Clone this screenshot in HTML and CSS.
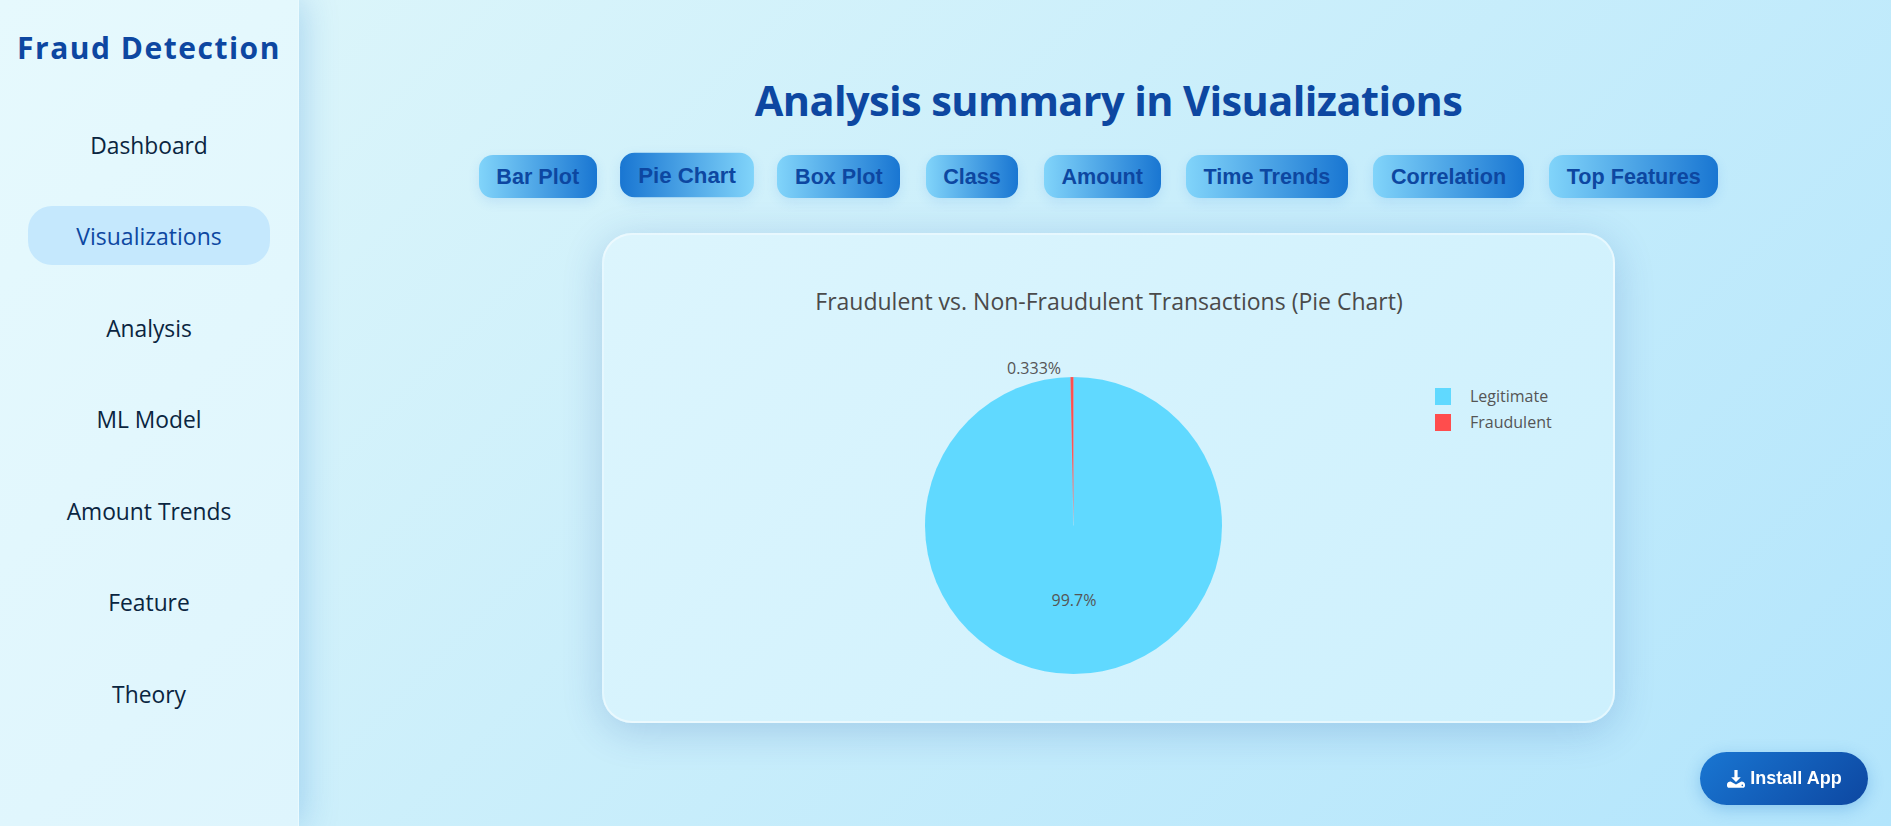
FILE: index.html
```html
<!DOCTYPE html>
<html lang="en">
<head>
  <meta charset="UTF-8">
  <meta name="viewport" content="width=device-width, initial-scale=1.0">
  <title>Fraud Detection</title>
  <link rel="stylesheet" href="styles.css">
</head>
<body>
  <div class="layout">
    <aside class="sidebar">
      <h2 class="brand">Fraud Detection</h2>
      <nav class="nav">
        <a class="nav-item">Dashboard</a>
        <a class="nav-item active">Visualizations</a>
        <a class="nav-item">Analysis</a>
        <a class="nav-item">ML Model</a>
        <a class="nav-item">Amount Trends</a>
        <a class="nav-item">Feature</a>
        <a class="nav-item">Theory</a>
      </nav>
    </aside>

    <main class="main">
      <h1 class="page-title">Analysis summary in Visualizations</h1>
      <div class="tabs">
        <button class="tab">Bar Plot</button>
        <button class="tab active">Pie Chart</button>
        <button class="tab">Box Plot</button>
        <button class="tab">Class</button>
        <button class="tab">Amount</button>
        <button class="tab">Time Trends</button>
        <button class="tab">Correlation</button>
        <button class="tab">Top Features</button>
      </div>

      <section class="chart-card">
        <svg class="chart" viewBox="0 0 1013 490" width="1013" height="490">
          <text class="chart-title" x="507" y="77" text-anchor="middle">Fraudulent vs. Non-Fraudulent Transactions (Pie Chart)</text>
          <circle cx="471.5" cy="292.5" r="148.5" fill="#60d9ff"/>
          <path d="M471.5 292.5 L471.5 144 L468.4 144 Z" fill="#ff4d4d" stroke="#fff" stroke-opacity="0.35" stroke-width="0.4"/>
          <text class="chart-label" x="432" y="141" text-anchor="middle">0.333%</text>
          <text class="chart-label" x="472" y="373" text-anchor="middle">99.7%</text>
          <rect x="833" y="155" width="16" height="17" fill="#60d9ff"/>
          <text class="chart-label" x="868" y="169">Legitimate</text>
          <rect x="833" y="181" width="16" height="17" fill="#ff4d4d"/>
          <text class="chart-label" x="868" y="195">Fraudulent</text>
        </svg>
      </section>
    </main>
  </div>

  <button class="install-btn">
    <svg class="install-icon" viewBox="0 0 20 20" width="20" height="20">
      <path d="M8.4 1h3.2v7.2h3.2L10 13 5.2 8.2h3.2z" fill="#fff"/>
      <path d="M3.2 18.8C1.9 18.8 1 17.9 1 16.7V15.6C1 13.6 2.8 12.4 4.6 12.4L10 15.4l5.4-3c1.8 0 3.6 1.2 3.6 3.2v1.1c0 1.2-.9 2.1-2.2 2.1z" fill="#fff"/>
      <circle cx="16.3" cy="16.4" r="0.8" fill="#1565c0"/>
    </svg>
    Install App
  </button>
</body>
</html>
```

FILE: styles.css
```css
* {
    box-sizing: border-box;
}
html, body {
    height: 100%;
}
body {
    margin: 0;
    overflow: hidden;
    font-family: "Open Sans", "Noto Sans", sans-serif;
    background: linear-gradient(135deg, #e0f7fa, #b3e5fc);
}
.layout {
    display: flex;
    height: 100vh;
}
.sidebar {
    width: 299px;
    flex-shrink: 0;
    padding: 26px 28px 0 28px;
    background: linear-gradient(135deg, #e6f9fd, #def5fd);
    box-shadow: 4px 0 32px rgba(25, 118, 210, 0.25);
    border-right: 1px solid #eafafe;
}
.brand {
    margin: 0 -20px 44px;
    text-align: center;
    font-size: 30px;
    line-height: 44px;
    font-weight: 700;
    letter-spacing: 1.5px;
    color: #0d47a1;
    white-space: nowrap;
}
.nav {
    display: flex;
    flex-direction: column;
    gap: 32.5px;
}
.nav-item {
    height: 59px;
    padding-top: 3px;
    display: flex;
    align-items: center;
    justify-content: center;
    border-radius: 24px;
    font-size: 22.8px;
    font-weight: 500;
    color: #0a2540;
}
.nav-item.active {
    padding-top: 1px;
    background: #c5e8fd;
    color: #0d47a1;
    font-size: 23px;
}
.main {
    flex: 1;
    padding: 70px 0 0 27px;
}
.page-title {
    margin: 0 0 25px;
    text-align: center;
    font-size: 41.5px;
    line-height: 60px;
    font-weight: 700;
    letter-spacing: -0.6px;
    color: #0d47a1;
}
.tabs {
    display: flex;
    justify-content: center;
    align-items: flex-start;
    gap: 25.4px;
    padding-right: 20px;
    margin-bottom: 35px;
}
.tab {
    height: 43px;
    padding: 0 17.6px;
    border: none;
    border-radius: 14px;
    font-family: "Liberation Sans", Arial, sans-serif;
    font-size: 21.6px;
    font-weight: 700;
    color: #0d47a1;
    background: linear-gradient(90deg, #81d4fa, #1976d2);
    box-shadow: 0 4px 12px rgba(30, 120, 220, 0.12);
}
.tab.active {
    transform: translateY(-1.5px) scale(1.03);
    background: linear-gradient(90deg, #1976d2, #81d4fa);
}
.chart-card {
    width: 1013px;
    height: 490px;
    margin: 0 auto;
    border-radius: 30px;
    border: 2px solid rgba(255, 255, 255, 0.45);
    background: linear-gradient(135deg, #dcf5fd, #cdf0fd);
    box-shadow: 0 8px 40px rgba(13, 71, 161, 0.2);
    overflow: hidden;
}
.chart {
    display: block;
    margin: -2px;
}
.chart-title {
    font-size: 23px;
    fill: #4a4a4a;
}
.chart-label {
    font-size: 16px;
    fill: #555;
}
.install-btn {
    position: fixed;
    right: 23px;
    bottom: 21px;
    width: 168px;
    height: 53px;
    display: flex;
    align-items: center;
    justify-content: center;
    gap: 4px;
    border: none;
    border-radius: 27px;
    font-family: "Liberation Sans", Arial, sans-serif;
    font-size: 18px;
    font-weight: 700;
    color: #fff;
    background: linear-gradient(135deg, #1976d2, #0d47a1);
    box-shadow: 0 4px 16px rgba(25, 118, 210, 0.3);
}
.install-icon {
    display: block;
}
```
